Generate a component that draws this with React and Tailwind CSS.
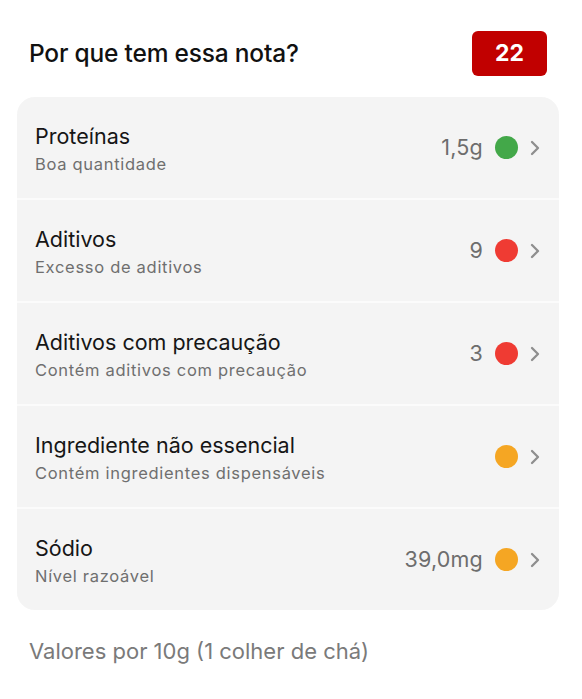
import React from "react";

const rows = [
  { t: "Proteínas", s: "Boa quantidade", v: "1,5g", c: "bg-[#43a849]" },
  { t: "Aditivos", s: "Excesso de aditivos", v: "9", c: "bg-[#ef3b33]" },
  { t: "Aditivos com precaução", s: "Contém aditivos com precaução", v: "3", c: "bg-[#ef3b33]" },
  { t: "Ingrediente não essencial", s: "Contém ingredientes dispensáveis", v: "", c: "bg-[#f5a623]" },
  { t: "Sódio", s: "Nível razoável", v: "39,0mg", c: "bg-[#f5a623]" },
];

function Chevron() {
  return (
    <svg width="12" height="18" viewBox="0 0 12 18" fill="none" className="ml-[11px]">
      <path d="M3 3l6 6-6 6" stroke="#8e8e8e" strokeWidth="2.3" strokeLinecap="round" strokeLinejoin="round" />
    </svg>
  );
}

export default function App() {
  return (
    <div className="w-[582px] h-[699px] bg-white font-['Inter',sans-serif]">
      <div className="flex items-center justify-between pl-[29px] pr-[35px] pt-[31px]">
        <h2 className="text-[24.5px] font-medium text-[#111] tracking-[-0.2px]">Por que tem essa nota?</h2>
        <div className="w-[75px] h-[45px] rounded-[6px] bg-[#c10000] flex items-center justify-center text-white text-[23px] font-bold">
          22
        </div>
      </div>
      <div className="mx-[17px] mt-[21px] w-[542px] rounded-[18px] bg-[#fbfbfb] flex flex-col gap-[2px] overflow-hidden">
        {rows.map((r, i) => (
          <div key={i} className={"flex items-center h-[101px] pl-[18px] pr-[18px] bg-[#f4f4f4]"}>
            <div className="flex-1 flex flex-col pt-[3px]">
              <div className="text-[21.5px] leading-[27px] text-[#161616]">{r.t}</div>
              <div className="text-[16.5px] leading-[24px] mt-[2px] text-[#6f6f6f] tracking-[0.7px]">{r.s}</div>
            </div>
            {r.v && <div className="text-[21.5px] text-[#6d6d6d] mr-[12px] tracking-[0.2px]">{r.v}</div>}
            <div className={"w-[23px] h-[23px] rounded-full " + r.c}></div>
            <Chevron />
          </div>
        ))}
      </div>
      <div className="pl-[29px] mt-[25px] text-[22px] text-[#7a7a7a]">Valores por 10g (1 colher de chá)</div>
    </div>
  );
}
